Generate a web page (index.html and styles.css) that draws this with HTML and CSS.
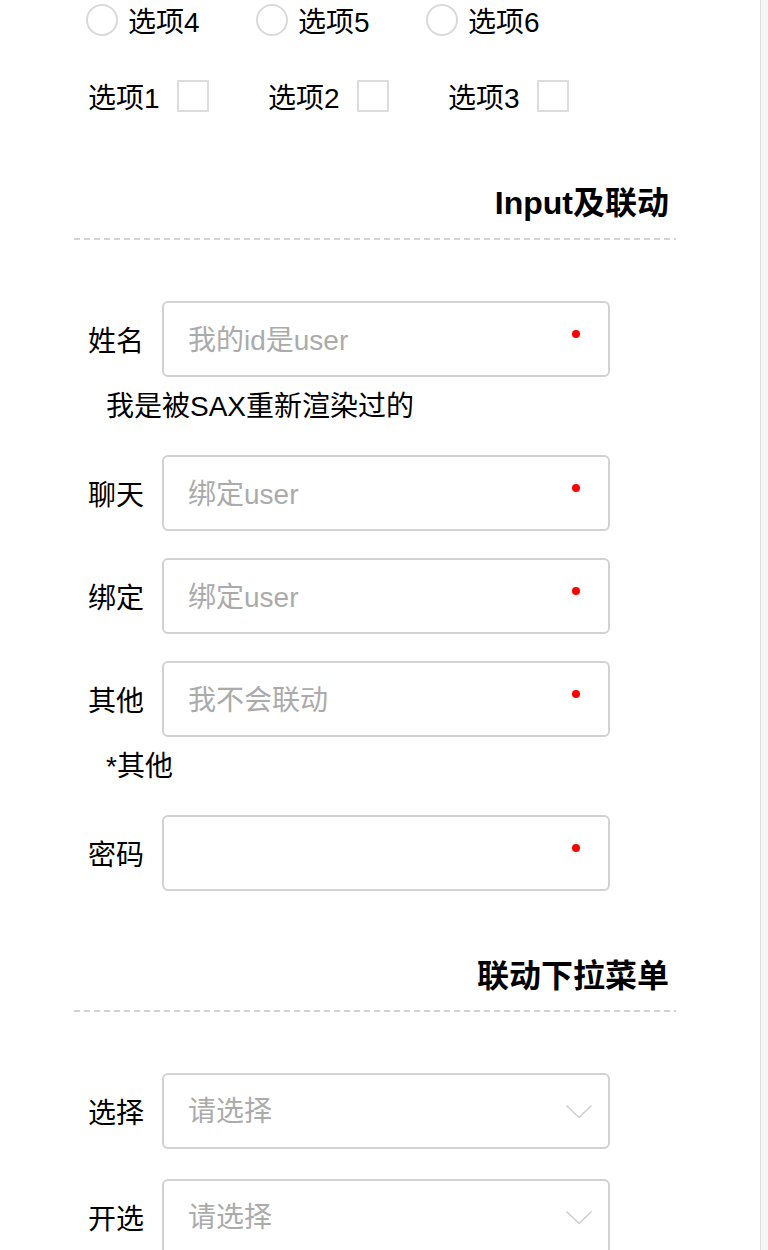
FILE: index.html
```html
<!DOCTYPE html>
<html lang="zh-CN">
<head>
<meta charset="utf-8">
<title>表单示例</title>
<link rel="stylesheet" href="styles.css">
</head>
<body>
<div class="window">
  <main class="page">
    <div class="choice-row radios">
      <label class="radio"><span class="radio-mark"></span><span>选项4</span></label>
      <label class="radio"><span class="radio-mark"></span><span>选项5</span></label>
      <label class="radio"><span class="radio-mark"></span><span>选项6</span></label>
    </div>
    <div class="choice-row checks">
      <label class="check"><span>选项1</span><span class="check-mark"></span></label>
      <label class="check"><span>选项2</span><span class="check-mark"></span></label>
      <label class="check"><span>选项3</span><span class="check-mark"></span></label>
    </div>

    <section class="section">
      <h2 class="section-title">Input及联动</h2>
      <div class="divider"></div>
      <div class="form">
        <div class="field-row">
          <span class="label">姓名</span>
          <div class="field"><input class="field-input" placeholder="我的id是user"><span class="dot"></span></div>
        </div>
        <p class="note">我是被SAX重新渲染过的</p>
        <div class="field-row">
          <span class="label">聊天</span>
          <div class="field"><input class="field-input" placeholder="绑定user"><span class="dot"></span></div>
        </div>
        <div class="field-row">
          <span class="label">绑定</span>
          <div class="field"><input class="field-input" placeholder="绑定user"><span class="dot"></span></div>
        </div>
        <div class="field-row">
          <span class="label">其他</span>
          <div class="field"><input class="field-input" placeholder="我不会联动"><span class="dot"></span></div>
        </div>
        <p class="note">*其他</p>
        <div class="field-row">
          <span class="label">密码</span>
          <div class="field"><input class="field-input" type="password"><span class="dot"></span></div>
        </div>
      </div>
    </section>

    <section class="section">
      <h2 class="section-title">联动下拉菜单</h2>
      <div class="divider"></div>
      <div class="form selects">
        <div class="field-row">
          <span class="label">选择</span>
          <div class="field select"><span class="select-text">请选择</span>
            <svg class="chevron" width="28" height="15" viewBox="0 0 28 15"><polyline points="1.5,1.5 14,13.5 26.5,1.5" fill="none" stroke="#cfcfcf" stroke-width="1.6"/></svg>
          </div>
        </div>
        <div class="field-row">
          <span class="label">开选</span>
          <div class="field select"><span class="select-text">请选择</span>
            <svg class="chevron" width="28" height="15" viewBox="0 0 28 15"><polyline points="1.5,1.5 14,13.5 26.5,1.5" fill="none" stroke="#cfcfcf" stroke-width="1.6"/></svg>
          </div>
        </div>
      </div>
    </section>
  </main>
  <div class="scrolltrack"></div>
</div>
</body>
</html>
```

FILE: styles.css
```css
* {
  box-sizing: border-box;
}

html, body {
  margin: 0;
  padding: 0;
  background: #ffffff;
}

body {
  font-family: "Liberation Sans", "Noto Sans CJK SC", sans-serif;
  font-size: 28px;
  color: #000;
}

.window {
  display: flex;
  height: 1250px;
  overflow: hidden;
}

.page {
  flex: 1;
  padding-left: 74px;
}

.scrolltrack {
  width: 8px;
  background: #f5f5f5;
  border-left: 1px solid #dedede;
}

.choice-row {
  display: flex;
  align-items: center;
  height: 40px;
}

.radios {
  padding-left: 12px;
}

.radio {
  width: 170px;
  display: flex;
  align-items: center;
  gap: 10px;
}

.radio-mark {
  width: 32px;
  height: 32px;
  border: 2px solid #d9d9d9;
  border-radius: 50%;
}

.checks {
  margin-top: 36px;
  padding-left: 14px;
}

.check {
  width: 180px;
  display: flex;
  align-items: center;
  gap: 17px;
}

.check-mark {
  width: 32px;
  height: 32px;
  border: 2px solid #dcdcdc;
}

.section {
  width: 602px;
  margin-top: 67px;
}

.section + .section {
  margin-top: 65px;
}

.section-title {
  margin: 0;
  padding-right: 7px;
  text-align: right;
  font-size: 32px;
  font-weight: bold;
  line-height: 40px;
}

.divider {
  margin-top: 15px;
  height: 2px;
  background: repeating-linear-gradient(90deg, #d4d4d4 0 6px, transparent 6px 10px);
}

.section + .section .divider {
  margin-top: 14px;
}

.form {
  margin-top: 61px;
  padding-left: 14px;
}

.selects {
  margin-top: 61px;
}

.field-row {
  display: flex;
  align-items: center;
}

.field-row + .field-row {
  margin-top: 27px;
}

.selects .field-row + .field-row {
  margin-top: 30px;
}

.label {
  width: 56px;
  margin-right: 18px;
  white-space: nowrap;
}

.field {
  width: 448px;
  height: 76px;
  border: 2px solid #d2d2d2;
  border-radius: 6px;
  display: flex;
  align-items: center;
  background: #fff;
}

.field-input {
  flex: 1;
  min-width: 0;
  height: 100%;
  border: none;
  outline: none;
  background: transparent;
  padding: 4px 0 0 24px;
  font: inherit;
  color: #000;
}

.field-input::placeholder {
  color: #ababab;
}

.dot {
  width: 8px;
  height: 8px;
  border-radius: 50%;
  background: #ff0000;
  margin: 0 28px 10px 0;
}

.select-text {
  flex: 1;
  padding-left: 24px;
  padding-bottom: 4px;
  color: #ababab;
}

.chevron {
  margin-right: 15px;
}

.note {
  margin: 0;
  padding: 10px 0 28px 18px;
  line-height: 40px;
}
```
